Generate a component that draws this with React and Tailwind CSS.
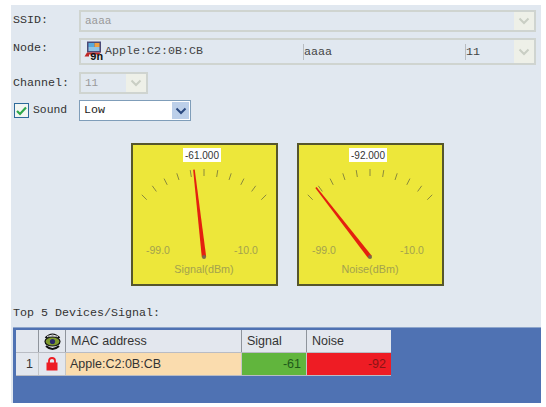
import React from 'react';

const mono = 'font-["Liberation_Mono",monospace]';
const sans = 'font-["Liberation_Sans",Arial,sans-serif]';

const Chevron = ({ color }) => (
  <svg width="12" height="8" viewBox="0 0 12 8">
    <path d="M1.5 1.5 L6 6 L10.5 1.5" fill="none" stroke={color} strokeWidth="2" />
  </svg>
);

const DisabledArrow = () => (
  <div className="flex h-full w-[20px] shrink-0 items-center justify-center bg-[#eef0e8]">
    <Chevron color="#c9cec4" />
  </div>
);

const Label = ({ children }) => (
  <div className={`${mono} w-[66px] shrink-0 text-[11.67px] leading-[14px] text-[#333]`}>{children}</div>
);

const Gauge = ({ value, title }) => {
  const cx = 72;
  const cy = 113;
  const ticks = Array.from({ length: 11 }, (_, i) => -45 + i * 9);
  const angle = ((-45 + (90 * (value + 99)) / 89) * Math.PI) / 180;
  const tipX = cx + 88 * Math.sin(angle);
  const tipY = cy - 88 * Math.cos(angle);
  const nx = Math.cos(angle);
  const ny = Math.sin(angle);
  const needle = [
    [tipX - nx * 0.8, tipY - ny * 0.8],
    [tipX + nx * 0.8, tipY + ny * 0.8],
    [cx + nx * 2.2, cy + ny * 2.2],
    [cx - nx * 2.2, cy - ny * 2.2],
  ]
    .map((p) => p.join(','))
    .join(' ');

  return (
    <div className="h-[143px] w-[147px] border-2 border-[#56562c] bg-[#ede73a]">
      <svg width="143" height="139" viewBox="1 1 143 139" className={sans}>
        {ticks.map((t) => {
          const a = (t * Math.PI) / 180;
          return (
            <line
              key={t}
              x1={cx + 81 * Math.sin(a)}
              y1={cy - 81 * Math.cos(a)}
              x2={cx + 88 * Math.sin(a)}
              y2={cy - 88 * Math.cos(a)}
              stroke="#8b8a3c"
              strokeWidth="1"
            />
          );
        })}
        <rect x="51" y="4" width="38" height="14" fill="#fff" />
        <text x="70" y="15" textAnchor="middle" fontSize="10" fill="#333">
          {value.toFixed(3)}
        </text>
        <text x="14" y="110" fontSize="10.5" fill="#a3a24e">-99.0</text>
        <text x="102" y="110" fontSize="10.5" fill="#a3a24e">-10.0</text>
        <text x={cx} y="129" textAnchor="middle" fontSize="10.8" fill="#a3a24e">{title}</text>
        <polygon points={needle} fill="#e4200f" />
        <circle cx={cx} cy={cy} r="2" fill="#7a6a4a" />
      </svg>
    </div>
  );
};

const NodeIcon = () => (
  <svg width="21" height="23" viewBox="0 0 21 23" className="shrink-0">
    <rect x="3" y="1.5" width="14" height="11" fill="#4a4a78" />
    <rect x="4.5" y="3" width="6" height="4" fill="#57a9dc" />
    <rect x="10.5" y="3" width="5" height="4" fill="#f0a040" />
    <rect x="4.5" y="7" width="11" height="4" fill="#8fc4e4" />
    <path d="M3 12.5 L0.5 16.5 L5 16.5 L5 14.5 L15 14.5 L17 12.5 Z" fill="#c02828" />
    <text x="6" y="20" fontSize="11" fontWeight="700" fill="#111" fontFamily="Liberation Mono, monospace">9n</text>
  </svg>
);

const EyeIcon = () => (
  <svg width="17" height="19" viewBox="0 0 17 19">
    <path d="M1.5 6 Q8.5 -1 15.5 6" fill="none" stroke="#111" strokeWidth="2" />
    <path d="M2 14 Q8.5 20 15 14" fill="none" stroke="#111" strokeWidth="2" />
    <ellipse cx="8.5" cy="9.5" rx="7.5" ry="4.5" fill="#7f9a2e" stroke="#111" strokeWidth="1.2" />
    <circle cx="8.5" cy="9.5" r="2.6" fill="#2a2a6a" />
    <path d="M3 4.5 Q8.5 1.5 14 4.5" fill="none" stroke="#eee" strokeWidth="1" />
  </svg>
);

const LockIcon = () => (
  <svg width="12" height="14" viewBox="0 0 12 14">
    <path d="M3 6 V3.8 Q3 1 6 1 Q9 1 9 3.8 V6" fill="none" stroke="#ed1c24" strokeWidth="1.8" />
    <rect x="0.5" y="5.5" width="11" height="8" fill="#ed1c24" />
  </svg>
);

const HeaderCell = ({ className, children }) => (
  <div className={`${className} flex h-[22px] items-center bg-[#e3e7ee] px-[5px] text-[#333]`}>{children}</div>
);

export default function App() {
  return (
    <div className="h-[407px] w-[546px] overflow-hidden bg-white">
      <div className="ml-[11px] mt-[5px] flex h-[398px] w-[530px] flex-col bg-[#e1e8f0]">
        <div className="ml-[2px] mt-[5px] flex h-[22px] items-start">
          <div className="pt-[3px]"><Label>SSID:</Label></div>
          <div className={`${mono} flex h-[22px] w-[457px] items-center border-2 border-[#cfd4d0] pl-[4px] text-[11px] text-[#999]`}>
            <span className="grow">aaaa</span>
            <DisabledArrow />
          </div>
        </div>

        <div className="ml-[2px] mt-[6px] flex h-[27px] items-start">
          <div className="pt-[3px]"><Label>Node:</Label></div>
          <div className={`${mono} flex h-[27px] w-[457px] items-center border-2 border-[#cfd4d0] text-[11.67px] text-[#444]`}>
            <div className="flex w-[222px] shrink-0 items-center">
              <div className="ml-[3px] flex"><NodeIcon /></div>
              <span>Apple:C2:0B:CB</span>
            </div>
            <div className="h-[16px] w-[162px] shrink-0 border-l border-[#b8bcc0] leading-[16px]">aaaa</div>
            <div className="h-[16px] w-[49px] shrink-0 border-l border-[#b8bcc0] leading-[16px]">11</div>
            <DisabledArrow />
          </div>
        </div>

        <div className="ml-[2px] mt-[7px] flex h-[22px] items-center">
          <Label>Channel:</Label>
          <div className={`${mono} flex h-[22px] w-[69px] items-center border-2 border-[#cfd4d0] pl-[4px] text-[11px] text-[#999]`}>
            <span className="grow">11</span>
            <DisabledArrow />
          </div>
        </div>

        <div className="ml-[3px] mt-[6px] flex h-[21px] items-center">
          <div className="flex h-[15px] w-[15px] items-center justify-center border border-[#2d6a9a] bg-[#f2f6f2]">
            <svg width="11" height="10" viewBox="0 0 11 10">
              <path d="M1 5 L4 8 L10 1.5" fill="none" stroke="#2fa84a" strokeWidth="2.2" />
            </svg>
          </div>
          <span className={`${mono} ml-[4px] w-[46px] text-[11.4px] text-[#333]`}>Sound</span>
          <div className={`${mono} flex h-[21px] w-[112px] items-center border border-[#7f9db9] bg-white pl-[4px] text-[11.67px] text-[#222]`}>
            <span className="grow">Low</span>
            <div className="mr-px flex h-[17px] w-[17px] items-center justify-center bg-[#bccfe9]">
              <Chevron color="#2c4a80" />
            </div>
          </div>
        </div>

        <div className="ml-[120px] mt-[22px] flex gap-[19px]">
          <Gauge value={-61} title="Signal(dBm)" />
          <Gauge value={-92} title="Noise(dBm)" />
        </div>

        <div className={`${mono} ml-[2px] mt-[20px] text-[11.67px] leading-[14px] text-[#333]`}>Top 5 Devices/Signal:</div>

        <div className={`${sans} ml-[2px] mt-[7px] h-[77px] w-[528px] border-t border-[#8ea6cc] bg-[#4f72b3] pl-[3px] pt-[2px] text-[12.5px]`}>
          <div className="flex w-[375px] gap-px bg-[#8f949c]">
            <HeaderCell className="w-[22px]" />
            <HeaderCell className="w-[26px] justify-center !px-0"><EyeIcon /></HeaderCell>
            <HeaderCell className="w-[175px]">MAC address</HeaderCell>
            <HeaderCell className="w-[64px]">Signal</HeaderCell>
            <HeaderCell className="w-[84px]">Noise</HeaderCell>
          </div>
          <div className="flex h-[24px] w-[375px] gap-px border-y border-[#b9bcc4] bg-[#c4c6c8] leading-[22px]">
            <div className="w-[22px] bg-[#e3e7ee] pr-[5px] text-right text-[#333]">1</div>
            <div className="flex w-[26px] items-center justify-center bg-[#e3e7ee]"><LockIcon /></div>
            <div className="w-[175px] bg-[#fadcae] px-[4px] text-[#333]">Apple:C2:0B:CB</div>
            <div className="w-[64px] bg-[#61b53d] pr-[5px] text-right text-[#1f5a1a]">-61</div>
            <div className="w-[84px] bg-[#ee1c24] pr-[5px] text-right text-[#8a1414]">-92</div>
          </div>
        </div>
      </div>
    </div>
  );
}
